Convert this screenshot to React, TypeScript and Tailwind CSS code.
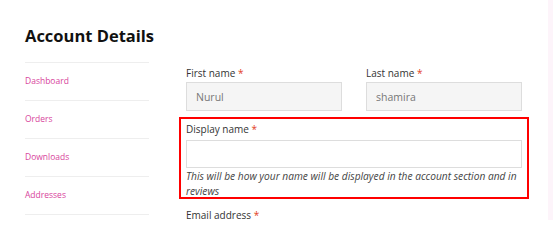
const links = ["Dashboard", "Orders", "Downloads", "Addresses"]

function Label({ children }: { children: string }) {
  return (
    <label className="block text-[10px] leading-[14px] text-[#333] mb-[2px]">
      {children} <span className="text-[#e2401c]">*</span>
    </label>
  )
}

export default function App() {
  return (
    <div className="w-[553px] h-[220px] overflow-hidden bg-white flex font-['Open_Sans',sans-serif]">
      <div className="flex-1 flex pl-[25px]">
        {/* sidebar */}
        <div className="w-[124px] shrink-0">
          <h2 className="mt-[24px] text-[16.5px] leading-[24px] font-bold text-[#111] whitespace-nowrap">
            Account Details
          </h2>
          <ul className="mt-[14px] border-t border-[#eee]">
            {links.map((l) => (
              <li key={l} className="h-[38px] flex items-center border-b border-[#eee]">
                <a className="text-[8.5px] text-[#d8449c]">{l}</a>
              </li>
            ))}
          </ul>
        </div>

        {/* form */}
        <div className="ml-[37px] w-[336px] pt-[66px]">
          <div className="grid grid-cols-2 gap-6">
            <div>
              <Label>First name</Label>
              <input
                defaultValue="Nurul"
                className="w-full h-[29px] px-[9px] bg-[#f5f5f5] border border-[#ddd] text-[10.5px] text-[#777] outline-none"
              />
            </div>
            <div>
              <Label>Last name</Label>
              <input
                defaultValue="shamira"
                className="w-full h-[29px] px-[9px] bg-[#f5f5f5] border border-[#ddd] text-[10.5px] text-[#777] outline-none"
              />
            </div>
          </div>

          <div className="mt-[6px] -mx-[7px] border-2 border-[#ff0000] px-[5px] pt-[3px] pb-0">
            <Label>Display name</Label>
            <input className="w-full h-[28px] mt-[2px] bg-white border border-[#ddd] outline-none" />
            <p className="mt-[1px] -mb-[2px] text-[10.2px] leading-[15px] italic text-[#444]">
              This will be how your name will be displayed in the account section and in reviews
            </p>
          </div>

          <div className="mt-[9px]">
            <Label>Email address</Label>
          </div>
        </div>
      </div>
      <div className="w-[5px] bg-[#fdf4fa]" />
    </div>
  )
}
